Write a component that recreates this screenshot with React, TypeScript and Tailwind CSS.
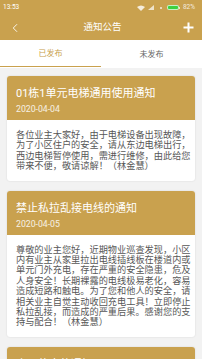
import { ChevronLeft } from "lucide-react";

const GOLD = "bg-[#c9a14e]";

const NOTICES = [
  {
    title: "01栋1单元电梯通用使用通知",
    date: "2020-04-04",
    lines: [
      "各位业主大家好，由于电梯设备出现故障，",
      "为了小区住户的安全，请从东边电梯出行，",
      "西边电梯暂停使用，需进行维修，由此给您",
      "带来不便，敬请谅解！（林金慧）",
    ],
  },
  {
    title: "禁止私拉乱接电线的通知",
    date: "2020-04-05",
    lines: [
      "尊敬的业主您好，近期物业巡查发现，小区",
      "内有业主从家里拉出电线插线板在楼道内或",
      "单元门外充电，存在严重的安全隐患，危及",
      "人身安全！长期裸露的电线极易老化，容易",
      "造成短路和触电。为了您和他人的安全，请",
      "相关业主自觉主动收回充电工具！立即停止",
      "私拉乱接，而造成的严重后果。感谢您的支",
      "持与配合！（林金慧）",
    ],
  },
  {
    title: "小区停水的通知",
    date: "2020-04-06",
    lines: ["因管道维修，小区将于明日暂停供水。"],
  },
];

function StatusBar() {
  return (
    <div className="h-[15px] flex items-center justify-between px-[3px] text-white text-[6.5px] leading-none">
      <span>13:53</span>
      <div className="flex items-center gap-[3px] pr-[4px]">
        <svg width="8" height="6" viewBox="0 0 8 6" className="opacity-80">
          <path d="M0 2 Q4 -1 8 2 L4 6 Z" fill="white" />
        </svg>
        <svg width="6" height="5" viewBox="0 0 6 5" className="opacity-70">
          <path d="M0 5 L6 0 L6 5 Z" fill="white" />
        </svg>
        <span className="w-[2px] h-[2px] rounded-full bg-white opacity-80 ml-[3px]" />
        <div className="flex items-center ml-[2px]">
          <div className="w-[12px] h-[5px] rounded-[2px] bg-[#3ed13e] border border-white/70" />
          <div className="w-[1px] h-[2px] bg-white/70" />
        </div>
        <span className="opacity-80">82%</span>
      </div>
    </div>
  );
}

export default function App() {
  return (
    <div
      className="w-[202px] h-[359px] overflow-hidden bg-[#f2f2f2]"
      style={{ fontFamily: 'Roboto, "Noto Sans CJK SC", sans-serif' }}
    >
      <div className={GOLD}>
        <StatusBar />
        <div className="h-[25px] flex items-center justify-between px-[8px] text-white">
          <ChevronLeft size={14} strokeWidth={1.5} />
          <span className="text-[9.5px]">通知公告</span>
          <svg width="11" height="11" viewBox="0 0 11 11">
            <path d="M5.5 0.5 V10.5 M0.5 5.5 H10.5" stroke="white" strokeWidth="2" />
          </svg>
        </div>
      </div>

      <div className="h-[28px] bg-white flex text-[8px]">
        <div className="flex-1 flex flex-col items-center">
          <span className="flex-1 flex items-center pt-[2px] text-[#c9a14e]">已发布</span>
          <div className="w-full h-[1.5px] bg-[#c9a14e] mb-[1px]" />
        </div>
        <div className="flex-1 flex items-center justify-center pt-[1px] text-[#666]">未发布</div>
      </div>

      <div className="flex flex-col gap-[10px] px-[7px] pt-[8px]">
        {NOTICES.map((n) => (
          <div key={n.title} className="bg-white rounded-[3px] shadow-[0_0_2px_rgba(0,0,0,0.12)] overflow-hidden">
            <div className={`${GOLD} h-[44px] px-[9px] pt-[10px] text-white`}>
              <div className="text-[11px] leading-[16px]">{n.title}</div>
              <div className="text-[8.7px] leading-[12px] mt-[1px] text-white/85">{n.date}</div>
            </div>
            <div className="px-[9px] pt-[10px] pb-[9px] text-[9.2px] leading-[10.4px] text-[#575757]">
              {n.lines.map((l) => (
                <div key={l} className="whitespace-nowrap">{l}</div>
              ))}
            </div>
          </div>
        ))}
      </div>
    </div>
  );
}
